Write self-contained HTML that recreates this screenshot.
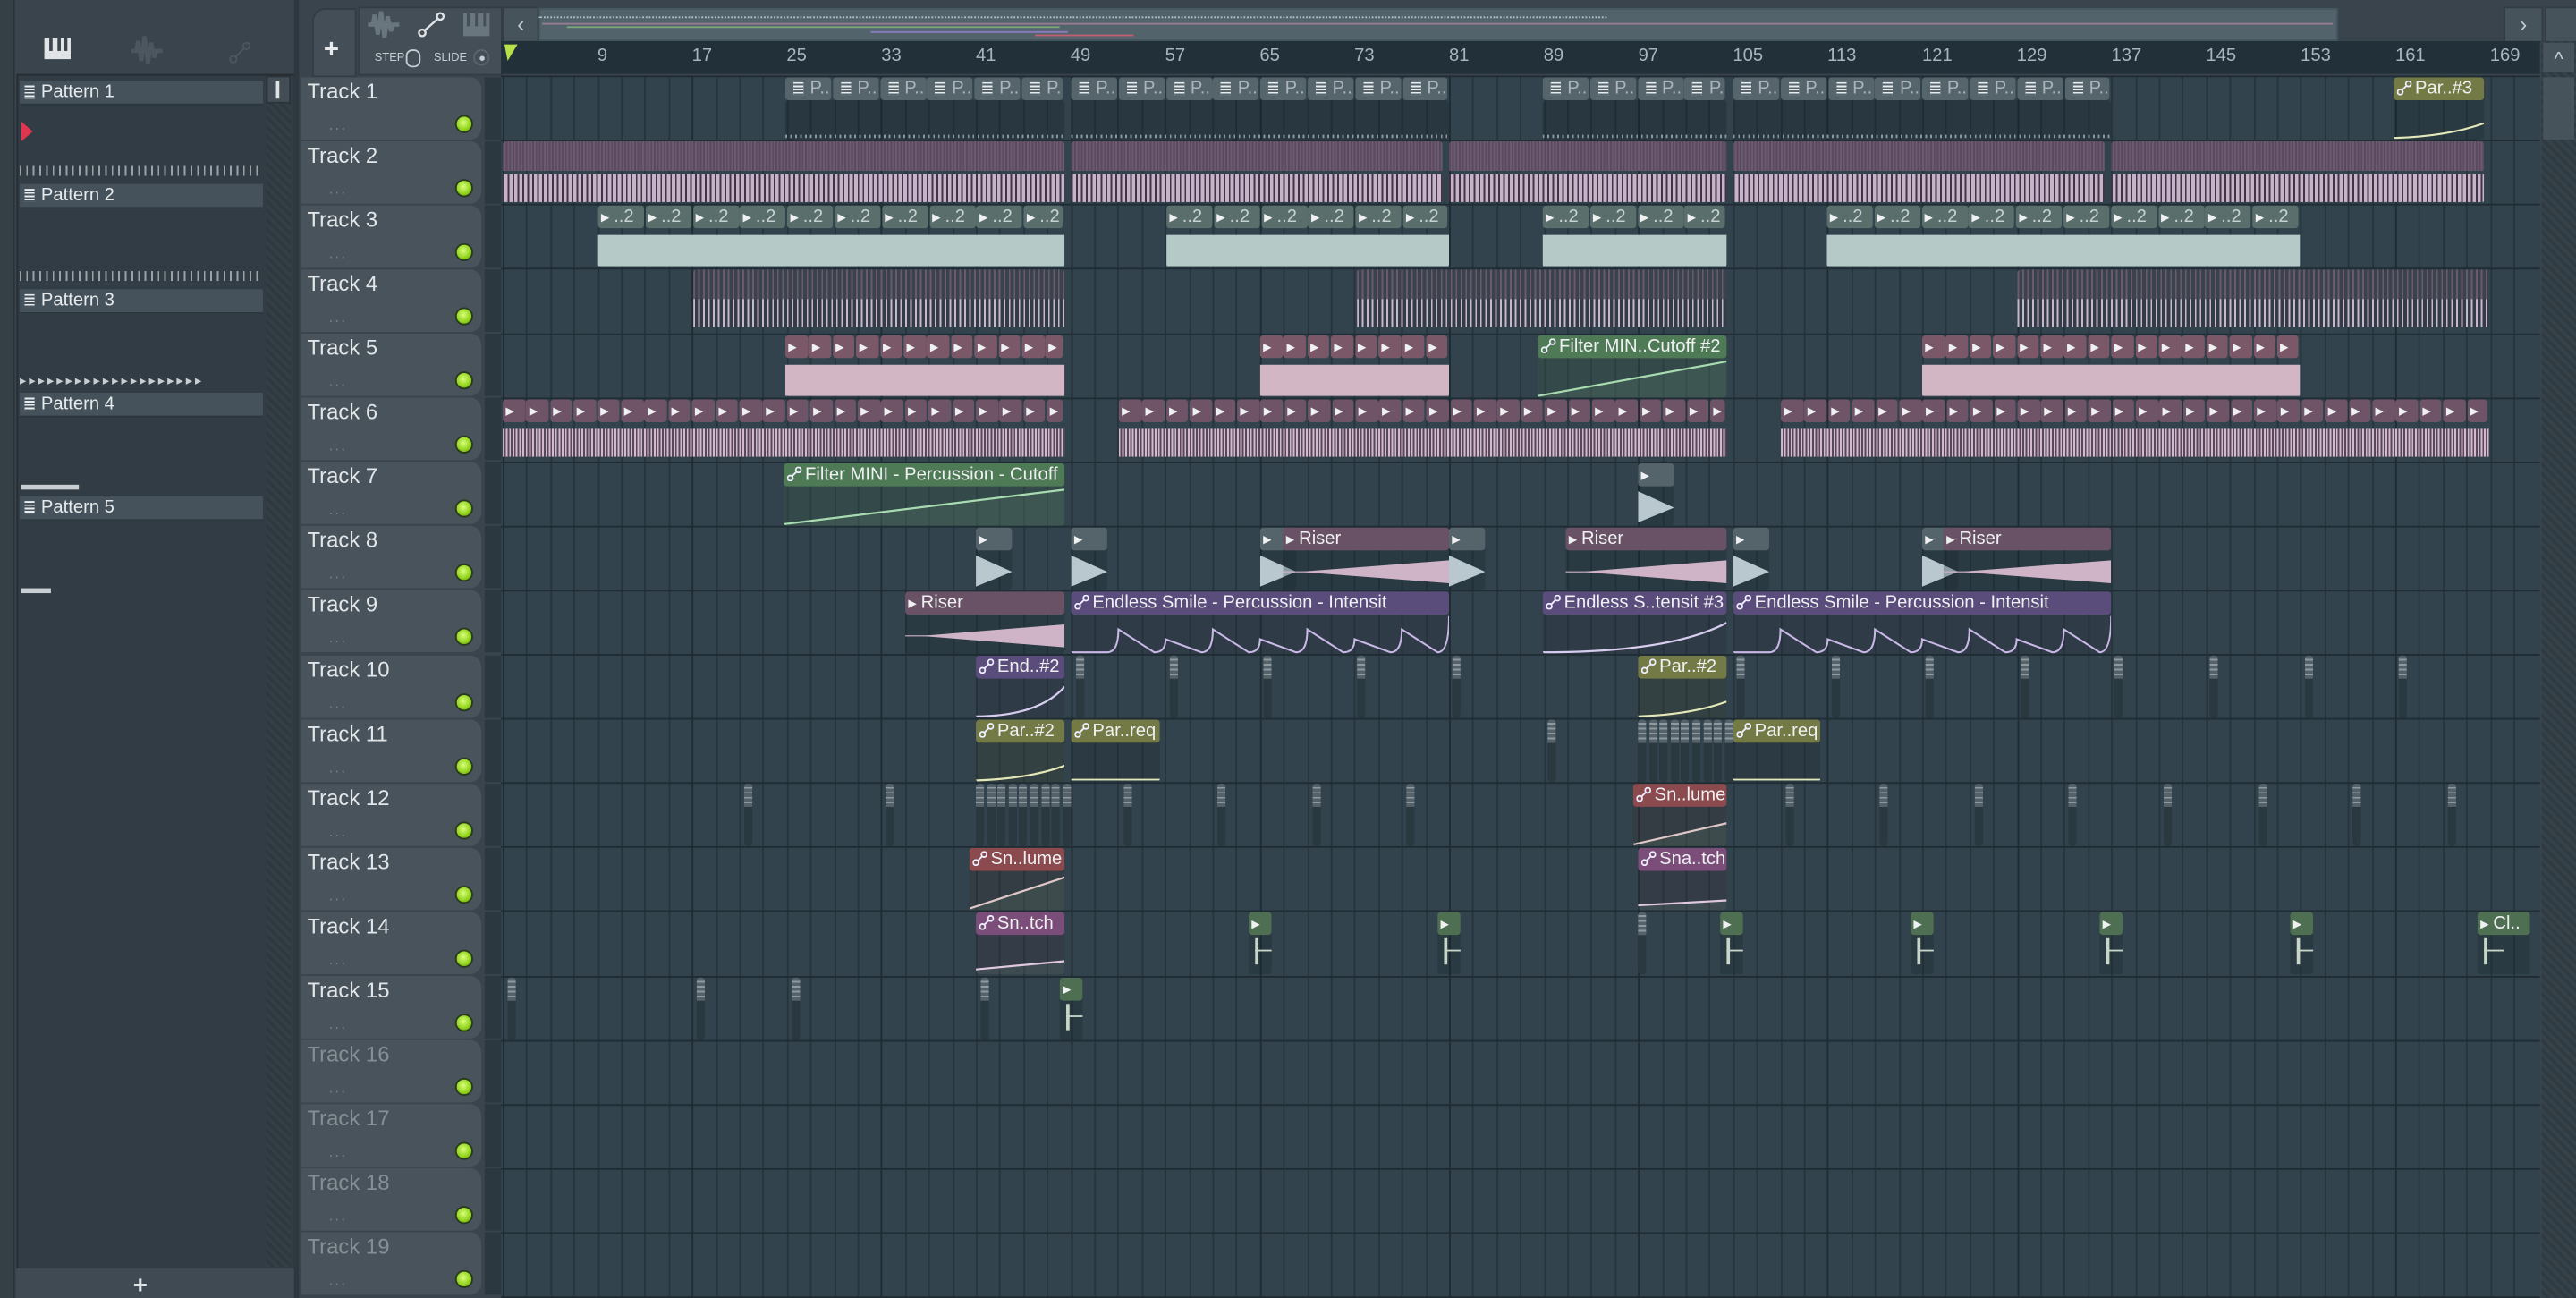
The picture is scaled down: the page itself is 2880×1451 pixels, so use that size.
<!DOCTYPE html>
<html><head><meta charset="utf-8">
<style>
html,body{margin:0;padding:0;width:2880px;height:1450px;overflow:hidden;background:#3a444c}
#w{position:absolute;left:0;top:0;width:1568px;height:790px;transform:scale(1.836735);transform-origin:0 0;background:#3a444c;font-family:"Liberation Sans Narrow","Liberation Sans",sans-serif;overflow:hidden}
.a{position:absolute}
.pat{position:absolute;left:12px;width:148px;height:14px;background:#45525b;color:#e6eaec;font-size:11px;line-height:14px;border-bottom:1px solid #2c363d}
.pi{display:inline-block;width:6px;height:8px;background:#e8ecee;margin:0 4px 0 3px;vertical-align:-1px;background-image:repeating-linear-gradient(#e8ecee 0 1px,#45525b 1px 2px);}
.th{position:absolute;left:183px;width:110px;height:38px;background:#48535b;border-radius:0 7px 7px 0;color:#e2e6e8;font-size:13px}
.th span.n{position:absolute;left:4px;top:1px}
.th .d{position:absolute;left:17px;top:24px;color:#6f7a82;font-size:10px;letter-spacing:1px}
.led{position:absolute;left:277px;width:9px;height:9px;border-radius:50%;background:radial-gradient(circle at 45% 40%,#d9ff7a,#8fd21a 60%,#5a8c10);border:1px solid #2a3a20}
.rl{position:absolute;top:28px;color:#a9b5bc;font-size:11px}
.c{position:absolute;overflow:hidden;border-radius:2px}
.ch{position:absolute;left:0;right:0;top:0;height:14px;font-size:11px;line-height:14px;color:#eef0f2;white-space:nowrap;overflow:hidden;border-radius:2px;padding-left:2px;box-sizing:border-box}
.cb{position:absolute;left:0;right:0;top:14px;bottom:0}
</style></head><body>
<div id="w">
<div class="a" style="left:0;top:0;width:8px;height:790px;background:#353f46;border-right:1px solid #2a3239"></div>
<div class="a" style="left:27px;top:23px;width:16px;height:13px;background:#e0e4e6"></div>
<div class="a" style="left:30px;top:23px;width:2px;height:8px;background:#3b464e"></div>
<div class="a" style="left:35px;top:23px;width:2px;height:8px;background:#3b464e"></div>
<div class="a" style="left:39px;top:23px;width:2px;height:8px;background:#3b464e"></div>
<svg class="a" style="left:75px;top:20px" width="100" height="22"><path d="M5 11 L8 11 L9 5 L11 17 L13 2 L15 19 L17 6 L19 15 L20 11 L24 11" stroke="#4b565e" stroke-width="2.5" fill="none"/><circle cx="67" cy="16" r="2" stroke="#4b565e" fill="none"/><circle cx="75" cy="8" r="2" stroke="#4b565e" fill="none"/><path d="M68 15 L74 9" stroke="#4b565e"/></svg>
<div class="a" style="left:10px;top:45px;width:168px;height:726px;background:#323c44;border:1px solid #262e34"></div>
<div class="a" style="left:162px;top:46px;width:15px;height:725px;background:repeating-linear-gradient(45deg,#343e45 0 2px,#2e383f 2px 4px)"></div>
<div class="a" style="left:162px;top:46px;width:15px;height:17px;background:#424d55;border:1px solid #2a3339;box-sizing:border-box"></div>
<div class="a" style="left:168px;top:49px;width:2px;height:11px;background:#dfe3e5"></div>
<div class="pat" style="top:49px"><span class="pi"></span>Pattern 1</div>
<div class="pat" style="top:112px"><span class="pi"></span>Pattern 2</div>
<div class="pat" style="top:176px"><span class="pi"></span>Pattern 3</div>
<div class="pat" style="top:239px"><span class="pi"></span>Pattern 4</div>
<div class="pat" style="top:302px"><span class="pi"></span>Pattern 5</div>
<svg class="a" style="left:12px;top:73px" width="10" height="14"><path d="M1 1 L8 7 L1 13 Z" fill="#e0354f"/></svg>
<div class="a" style="left:12px;top:101px;width:148px;height:6px;background:repeating-linear-gradient(90deg,#c8ced2 0 1px,transparent 1px 4px);opacity:.7"></div>
<div class="a" style="left:12px;top:165px;width:148px;height:6px;background:repeating-linear-gradient(90deg,#c8ced2 0 1px,transparent 1px 4px);opacity:.7"></div>
<div class="a" style="left:12px;top:228px;width:146px;height:8px;color:#c8ced2;font-size:8px;line-height:8px;letter-spacing:1.6px;overflow:hidden;white-space:nowrap">▸▸▸▸▸▸▸▸▸▸▸▸▸▸▸▸▸▸▸▸</div>
<div class="a" style="left:13px;top:295px;width:35px;height:3px;background:#c8ced2"></div>
<div class="a" style="left:13px;top:358px;width:18px;height:3px;background:#c8ced2"></div>
<div class="a" style="left:10px;top:772px;width:169px;height:18px;background:#3f4a52"></div>
<div class="a" style="left:81px;top:774px;color:#e0e4e6;font-size:15px;font-weight:bold">+</div>
<div class="a" style="left:179px;top:0;width:3px;height:790px;background:#2e373e"></div>
<div class="a" style="left:190px;top:5px;width:25px;height:40px;background:#434e56;border-radius:8px 0 0 0;border:1px solid #333c43"></div>
<div class="a" style="left:197px;top:22px;color:#e6eaec;font-size:16px;font-weight:bold">+</div>
<div class="a" style="left:218px;top:4px;width:86px;height:40px;background:#434e56;border:1px solid #333c43"></div>
<svg class="a" style="left:222px;top:5px" width="80" height="20"><path d="M2 10 L5 10 L6 4 L8 16 L10 2 L12 18 L14 5 L16 14 L17 10 L21 10" stroke="#6a767d" stroke-width="2.5" fill="none"/><circle cx="35" cy="15" r="2" stroke="#dfe3e5" fill="none" stroke-width="1.3"/><circle cx="46" cy="5" r="2" stroke="#dfe3e5" fill="none" stroke-width="1.3"/><path d="M36 14 L45 6" stroke="#dfe3e5" stroke-width="1.3"/><rect x="60" y="3" width="16" height="14" fill="#6a767d"/><path d="M63 3 V11 M68 3 V11 M73 3 V11" stroke="#434e56" stroke-width="1.6"/></svg>
<div class="a" style="left:228px;top:32px;color:#c6ced2;font-size:7px">STEP</div>
<div class="a" style="left:247px;top:30px;width:9px;height:11px;border:1px solid #c6ced2;border-radius:4px;box-sizing:border-box"></div>
<div class="a" style="left:264px;top:32px;color:#c6ced2;font-size:7px">SLIDE</div>
<div class="a" style="left:288px;top:30px;width:10px;height:10px;border:1px solid #59656c;border-radius:50%;box-sizing:border-box"></div>
<div class="a" style="left:292px;top:34px;width:3px;height:3px;background:#c6ced2;border-radius:50%"></div>
<div class="a" style="left:306px;top:4px;width:20px;height:20px;background:#47535b;border:1px solid #333c43;color:#c6ced2;font-size:13px;text-align:center;line-height:19px">‹</div>
<div class="a" style="left:328px;top:5px;width:1093px;height:18px;background:#52636c;border:1px solid #465860"></div>
<div class="a" style="left:328px;top:10px;width:650px;height:1px;border-top:1px dotted #b6c0c6"></div>
<div class="a" style="left:330px;top:14px;width:1090px;height:1px;background:#9a7c8f"></div>
<div class="a" style="left:345px;top:16px;width:300px;height:1px;background:#7fa57a"></div>
<div class="a" style="left:530px;top:19px;width:120px;height:1px;background:#8b7cc0"></div>
<div class="a" style="left:630px;top:21px;width:60px;height:1px;background:#c06070"></div>
<div class="a" style="left:1524px;top:4px;width:22px;height:20px;background:#47535b;border:1px solid #333c43;color:#c6ced2;font-size:13px;text-align:center;line-height:19px">›</div>
<div class="a" style="left:1549px;top:4px;width:18px;height:20px;background:#47535b;border:1px solid #333c43"></div>
<div class="a" style="left:305px;top:25px;width:1241px;height:20px;background:#22303a"></div>
<svg class="a" style="left:306px;top:26px" width="10" height="12"><path d="M1 1 L9 1 L3 11 Z" fill="#b8e04a"/></svg>
<div class="a" style="left:1547px;top:25px;width:21px;height:765px;background:repeating-linear-gradient(45deg,#36424a 0 2px,#2f3a41 2px 4px)"></div>
<div class="a" style="left:1548px;top:26px;width:19px;height:18px;background:#47535b;color:#c6ced2;font-size:12px;text-align:center;line-height:20px">^</div>
<div class="a" style="left:1548px;top:47px;width:19px;height:38px;background:#47535b"></div>
<div id="tl" class="a" style="left:305px;top:46px;width:1241px;height:744px;background:#32434d"></div>
</div>
<script>
const W=document.getElementById('w');
function el(h){W.insertAdjacentHTML('beforeend',h)}
const R=i=>46.6+39.1*i;
const B=b=>306+(b-1)*7.2;
let g='';
for(let b=1;b<=172;b+=2){const x=B(b);g+=`<div class="a" style="left:${x}px;top:46px;width:1px;height:744px;background:${(b-1)%16==0?'#1e2b33':'#26343d'}"></div>`}
for(let i=0;i<=19;i++){g+=`<div class="a" style="left:305px;top:${R(i)-0.5}px;width:1241px;height:1px;background:#1f2c34"></div>`}
el(g);
let r='';for(let b=1;b<=169;b+=8){r+=`<div class="rl" style="left:${B(b)+(b==1?3:0)}px">${b==1?'':b}</div>`}el(r);
let h='';for(let i=0;i<19;i++){const y=R(i);h+=`<div class="th" style="top:${y}px;${i>=15?'color:#868f95':''}"><span class="n">Track ${i+1}</span><span class="d">...</span></div><div class="led" style="top:${y+23}px"></div><div class="a" style="left:295px;top:${y}px;width:10px;height:38px;background:#2b3840"></div>`}el(h);

const PI='<span class="pi" style="background-image:repeating-linear-gradient(#e8ecee 0 1px,#56646b 1px 2px)"></span>';
const AR='<b style="font-size:9px">&#9656;</b> ';
const AU='<svg width="9" height="9" style="vertical-align:-1px;margin-right:2px"><circle cx="2" cy="7" r="1.6" stroke="#eef" fill="none"/><circle cx="7" cy="2" r="1.6" stroke="#eef" fill="none"/><path d="M3 6 L6 3" stroke="#eef"/></svg>';
function clip(x0,x1,row,hc,label,body,bodybg){
  const y=R(row)+0.5;
  el(`<div class="c" style="left:${x0}px;top:${y}px;width:${x1-x0}px;height:38px;background:${bodybg||'rgba(20,30,38,.25)'}"><div class="ch" style="background:${hc}">${label||''}</div><div class="cb">${body||''}</div></div>`);
}
// continuous body + chunked headers
function seg(x0,x1,w,row,hc,label,body,bb){
  const y=R(row)+0.5;
  el(`<div class="c" style="left:${x0}px;top:${y+14}px;width:${x1-x0}px;height:24px;background:${bb||'rgba(20,30,38,.25)'}">${body||''}</div>`);
  for(let x=x0;x<x1-1;x+=w){el(`<div class="c" style="left:${x}px;top:${y}px;width:${Math.min(x+w,x1)-x-0.8}px;height:14px"><div class="ch" style="background:${hc}">${label}</div></div>`)}
}
const wav=(c,top,bot)=>`<div class="a" style="left:0;right:0;top:${top}px;bottom:${bot}px;background:${c}"></div>`;
const stripes=(c,bg,top,bot,s)=>`<div class="a" style="left:0;right:0;top:${top}px;bottom:${bot}px;background:repeating-linear-gradient(90deg,${c} 0 1px,${bg} 1px ${s}px)"></div>`;
const line=(pts,c)=>`<svg class="a" style="left:0;top:0" width="100%" height="24" viewBox="0 0 100 24" preserveAspectRatio="none"><polygon points="${pts} 100,24 0,24" fill="rgba(120,160,130,.15)"/><polyline points="${pts}" stroke="${c}" stroke-width="1.2" fill="none" vector-effect="non-scaling-stroke"/></svg>`;
const tri=c=>`<svg class="a" style="left:0;top:0" width="100%" height="24" viewBox="0 0 100 24" preserveAspectRatio="none"><polygon points="0,3 100,13 0,22" fill="${c}"/></svg>`;
const riser=`<svg class="a" style="left:0;top:0" width="100%" height="24" viewBox="0 0 100 24" preserveAspectRatio="none"><line x1="0" y1="13" x2="100" y2="13" stroke="#cfb4c8" stroke-width=".6"/><polygon points="10,13 100,6 100,20" fill="#cfb4c8"/></svg>`;
function spikes(n){let p='M0 23';for(let k=0;k<n;k++){const x1=(k+1)*100/n;const hgt=k==n-1?22:(k%2?8:14);p+=` L${x1-3} 23 Q${x1} 23 ${x1} ${23-hgt}`;}return `<svg class="a" style="left:0;top:0" width="100%" height="24" viewBox="0 0 100 24" preserveAspectRatio="none"><path d="${p}" stroke="#c9b8e6" stroke-width="1.1" fill="none" vector-effect="non-scaling-stroke"/></svg>`}
const curve=`<svg class="a" style="left:0;top:0" width="100%" height="24" viewBox="0 0 100 24" preserveAspectRatio="none"><path d="M0 23 Q70 23 100 5" stroke="#d8cdf0" stroke-width="1.2" fill="none" vector-effect="non-scaling-stroke"/></svg>`;
const curveY=`<svg class="a" style="left:0;top:0" width="100%" height="24" viewBox="0 0 100 24" preserveAspectRatio="none"><path d="M0 23 Q60 22 100 14" stroke="#e4e8b8" stroke-width="1.2" fill="none" vector-effect="non-scaling-stroke"/></svg>`;

const t1b=`<div class="a" style="left:0;right:0;bottom:1px;height:2px;background:repeating-linear-gradient(90deg,#8a979e 0 1px,transparent 1px 3px)"></div>`;
[[478,648],[652,882],[939,1051],[1055,1285]].forEach(s=>seg(s[0],s[1],28.8,0,'#56646b',PI+'<span style="color:#aab4ba">P..</span>',t1b,'rgba(20,30,38,.3)'));
clip(1457,1512,0,'#737a45',AU+'Par..#3',curveY);
const t2=stripes('#5a4a5e','#6c5a70',0,20,2)+stripes('#3f3344','#c6b3ca',20,1,3);
[[306,648],[652,878],[882,1051],[1055,1281],[1285,1512]].forEach(s=>{const y=R(1)+0.5;el(`<div class="c" style="left:${s[0]}px;top:${y}px;width:${s[1]-s[0]}px;height:38px">${t2}</div>`)});
[[364,648],[710,882],[939,1051],[1112,1400]].forEach(s=>seg(s[0],s[1],28.8,2,'#5a6f6b',AR+'<span style="color:#c6d2d0">..2</span>',wav('#b5cac6',4,1),'transparent'));
[[422,648],[826,1051],[1228,1515]].forEach(s=>{const y=R(3)+0.5;el(`<div class="c" style="left:${s[0]}px;top:${y}px;width:${s[1]-s[0]}px;height:38px">${stripes('#6a5a70','#3a424c',0,18,3)}${stripes('#c8b6cc','#323c46',18,3,3)}</div>`)});
[[478,648],[767,882],[1170,1400]].forEach(s=>seg(s[0],s[1],14.4,4,'#7a5868',AR,wav('#d3b6c4',4,1),'transparent'));
clip(936,1051,4,'#4e7a55',AU+'Filter MIN..Cutoff #2',line('0,23 100,2','#a8dcb0'),'rgba(60,90,70,.3)');
[[306,648],[681,1051],[1084,1515]].forEach(s=>seg(s[0],s[1],14.4,5,'#6f5468',AR,stripes('#d4b8cc','#54485a',4,3,2),'transparent'));
clip(477,648,6,'#4e7a55',AU+'Filter MINI - Percussion - Cutoff',line('0,23 100,2','#a8dcb0'),'rgba(60,90,70,.3)');
clip(997,1019,6,'#55636a',AR,tri('#b8c8ce'));
[[594,616],[652,674],[767,789],[882,904],[1055,1077],[1170,1192]].forEach(s=>clip(s[0],s[1],7,'#55636a',AR,tri('#b8c8ce')));
[[781,882],[953,1051],[1183,1285]].forEach(s=>clip(s[0],s[1],7,'#6a5266',AR+'Riser',riser));
clip(551,648,8,'#6a5266',AR+'Riser',riser);
clip(652,882,8,'#5a4d7c',AU+'Endless Smile - Percussion - Intensit',spikes(8),'rgba(40,40,60,.25)');
clip(939,1051,8,'#5a4d7c',AU+'Endless S..tensit #3',curve,'rgba(40,40,60,.25)');
clip(1055,1285,8,'#5a4d7c',AU+'Endless Smile - Percussion - Intensit',spikes(8),'rgba(40,40,60,.25)');
function mk(x,row){const y=R(row)+0.5;el(`<div class="c" style="left:${x}px;top:${y}px;width:5px;height:38px;background:#2a3840"><div class="a" style="left:0;top:0;width:5px;height:14px;background:#56626a;background-image:repeating-linear-gradient(#56626a 0 2px,#8e9aa0 2px 3px)"></div></div>`)}
clip(594,648,9,'#5a4d7c',AU+'End..#2',curve,'rgba(40,40,60,.25)');
clip(997,1051,9,'#737a45',AU+'Par..#2',curveY,'rgba(60,60,40,.25)');
[655,712,769,826,884,1057,1115,1172,1230,1287,1345,1403,1460].forEach(x=>mk(x,9));
clip(594,648,10,'#737a45',AU+'Par..#2',curveY,'rgba(60,60,40,.25)');
clip(652,706,10,'#737a45',AU+'Par..req','<div class="a" style="left:0;right:0;bottom:1px;height:1px;background:#e4e8b8"></div>','rgba(30,40,45,.3)');
clip(1055,1108,10,'#737a45',AU+'Par..req','<div class="a" style="left:0;right:0;bottom:1px;height:1px;background:#e4e8b8"></div>','rgba(30,40,45,.3)');
mk(942,10);for(let x=997;x<1050;x+=6.6)mk(x,10);
clip(994,1051,11,'#8a4a4e',AU+'Sn..lume',line('0,23 100,10','#e0c8c8'),'rgba(60,40,45,.25)');
[453,539,684,741,799,856,1087,1144,1202,1259,1317,1375,1432,1490].forEach(x=>mk(x,11));for(let x=594;x<647;x+=6.6)mk(x,11);
clip(590,648,12,'#8a4a4e',AU+'Sn..lume',line('0,23 100,4','#e0c8c8'),'rgba(60,40,45,.25)');
clip(997,1051,12,'#7a4e78',AU+'Sna..tch',line('0,21 100,18','#e0c8e0'),'rgba(60,40,60,.25)');
clip(594,648,13,'#7a4e78',AU+'Sn..tch',line('0,21 100,16','#e0c8e0'),'rgba(60,40,60,.25)');
const spk=`<div class="a" style="left:4px;top:2px;width:2px;height:16px;background:#c8d6c8"></div><div class="a" style="left:4px;top:9px;width:12px;height:1px;background:#c8d6c8"></div>`;
[[760,774],[875,889],[1047,1061],[1163,1177],[1278,1292],[1394,1408]].forEach(s=>clip(s[0],s[1],13,'#4f6f52',AR,spk));
clip(1508,1540,13,'#4f6f52',AR+'Cl..',spk);
mk(997,13);
[309,424,482,597].forEach(x=>mk(x,14));
clip(645,659,14,'#4f6f52',AR,spk);
</script>
</body></html>
